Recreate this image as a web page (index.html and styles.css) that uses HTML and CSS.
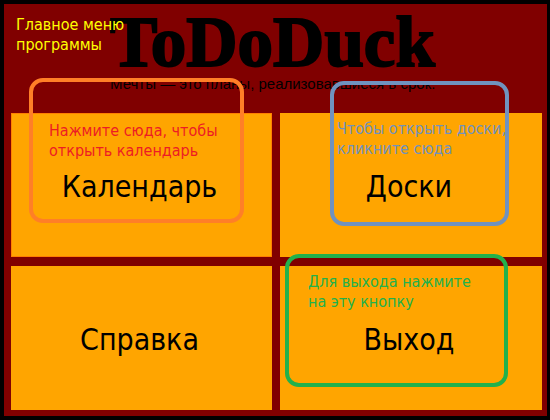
FILE: index.html
```html
<!DOCTYPE html>
<html lang="ru">
<head>
<meta charset="utf-8">
<meta name="viewport" content="width=device-width, initial-scale=1">
<title>ToDoDuck</title>
<link rel="stylesheet" href="styles.css">
</head>
<body>
<main class="window">
  <p class="hint hint-menu">Главное меню<br>программы</p>
  <header class="header">
    <h1 class="title">ToDoDuck</h1>
    <p class="slogan">Мечты — это планы, реализовавшиеся в срок.</p>
  </header>
  <nav class="menu">
    <div class="cell">
      <button class="tile tile-active" type="button">Календарь</button>
      <p class="hint frame frame-calendar">Нажмите сюда, чтобы<br>открыть календарь</p>
    </div>
    <div class="cell">
      <button class="tile" type="button">Доски</button>
      <p class="hint frame frame-boards">Чтобы открыть доски,<br>кликните сюда</p>
    </div>
    <div class="cell">
      <button class="tile" type="button">Справка</button>
    </div>
    <div class="cell">
      <button class="tile" type="button">Выход</button>
      <p class="hint frame frame-exit">Для выхода нажмите<br>на эту кнопку</p>
    </div>
  </nav>
</main>
</body>
</html>
```
FILE: styles.css
```css
* {
  box-sizing: border-box;
}

body {
  margin: 0;
  background: #000;
  font-family: "DejaVu Sans Condensed", "Noto Sans", sans-serif;
}

.window {
  position: relative;
  display: flex;
  flex-direction: column;
  min-height: 100vh;
  padding: 9px 5px 6px 7px;
  border: 4px solid #000;
  border-right-width: 3px;
  background: #800000;
}

.header {
  width: max-content;
  height: 100px;
  margin-left: 99px;
  color: #000;
}

.title {
  margin: 0;
  font: bold 71px/58px "Liberation Serif", serif;
  -webkit-text-stroke: 2px #000;
}

.slogan {
  margin: 0;
  font: 15px/26px "Liberation Sans", sans-serif;
}

.menu {
  flex: 1;
  display: grid;
  grid-template-columns: 261fr 262fr;
  grid-template-rows: 1fr 1fr;
  gap: 9px 8px;
}

.cell {
  position: relative;
  display: flex;
}

.tile {
  flex: 1;
  padding: 4px 4px 0 0;
  border: 0;
  background: #ffa500;
  color: #000;
  font: 30px/36px "DejaVu Sans Condensed", "Noto Sans", sans-serif;
}

.tile-active {
  border: 1px solid #ff8000;
}

.hint {
  margin: 0;
  font-size: 16px;
  line-height: 20px;
  white-space: nowrap;
}

.hint-menu {
  position: absolute;
  z-index: 1;
  top: 11px;
  left: 12px;
  color: #ff0;
}

/* Callout frames lie over the tiles and let clicks through. */
.frame {
  position: absolute;
  z-index: 1;
  border: 4px solid;
  border-radius: 14px;
  pointer-events: none;
}

.frame-calendar {
  top: -35px;
  left: 18px;
  width: 215px;
  height: 145px;
  padding: 39px 0 0 16px;
  border-color: #ff7f27;
  color: #ed1c24;
}

.frame-boards {
  top: -32px;
  left: 50px;
  width: 179px;
  height: 145px;
  padding: 34px 0 0 3px;
  border-color: #7092be;
  color: #7092be;
}

.frame-exit {
  top: -12px;
  left: 5px;
  width: 223px;
  height: 133px;
  padding: 14px 0 0 19px;
  border-color: #22b14c;
  color: #22b14c;
}
```
